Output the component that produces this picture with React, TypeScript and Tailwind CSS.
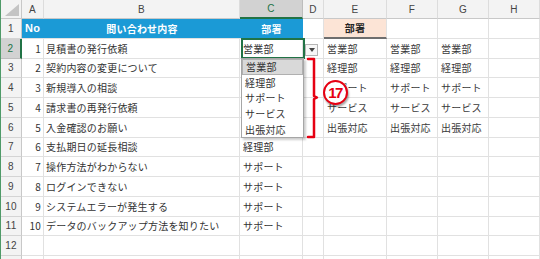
const cols = ["A", "B", "C", "D", "E", "F", "G", "H"];

type Row = { no: string; q: string; c: string; e: string; f: string; g: string };

// C3〜C6 はドロップダウンに隠れるので空
const rows: Row[] = [
  { no: "1", q: "見積書の発行依頼", c: "営業部", e: "営業部", f: "営業部", g: "営業部" },
  { no: "2", q: "契約内容の変更について", c: "", e: "経理部", f: "経理部", g: "経理部" },
  { no: "3", q: "新規導入の相談", c: "", e: "サポート", f: "サポート", g: "サポート" },
  { no: "4", q: "請求書の再発行依頼", c: "", e: "サービス", f: "サービス", g: "サービス" },
  { no: "5", q: "入金確認のお願い", c: "", e: "出張対応", f: "出張対応", g: "出張対応" },
  { no: "6", q: "支払期日の延長相談", c: "経理部", e: "", f: "", g: "" },
  { no: "7", q: "操作方法がわからない", c: "サポート", e: "", f: "", g: "" },
  { no: "8", q: "ログインできない", c: "サポート", e: "", f: "", g: "" },
  { no: "9", q: "システムエラーが発生する", c: "サポート", e: "", f: "", g: "" },
  { no: "10", q: "データのバックアップ方法を知りたい", c: "サポート", e: "", f: "", g: "" },
  { no: "", q: "", c: "", e: "", f: "", g: "" },
  { no: "", q: "", c: "", e: "", f: "", g: "" },
];

const options = ["営業部", "経理部", "サポート", "サービス", "出張対応"];

const cell = "border-r border-b border-[#e1e1e1] flex items-center overflow-hidden whitespace-nowrap";

function RowHead({ n, active }: { n: number; active?: boolean }) {
  return (
    <div
      className={`flex items-center justify-center border-b border-r font-['Liberation_Sans',sans-serif] text-[10px] ${
        active
          ? "bg-[#d2d2d2] text-[#217346] border-r-2 border-r-[#217346] border-b-[#bdbdbd]"
          : "bg-[#f3f3f3] text-[#444] border-r-[#c8c8c8] border-b-[#d4d4d4]"
      }`}
    >
      {n <= 12 ? n : ""}
    </div>
  );
}

export default function App() {
  return (
    <div className="relative w-[540px] h-[259px] overflow-hidden bg-white border-l border-[#4f9a68] font-['Noto_Sans_CJK_JP',sans-serif] text-[10px] tracking-[0.2px] text-[#333]">
      <div className="grid grid-cols-[21px_22px_196px_63px_21px_63px_51px_51px_51px] grid-rows-[19px_repeat(13,19.75px)]">
        {/* column header row */}
        <div className="relative bg-[#f3f3f3] border-r border-b border-[#c8c8c8]">
          <svg className="absolute right-[2px] bottom-[2px]" width="14" height="12" viewBox="0 0 14 12">
            <path d="M14 0 V12 H0 Z" fill="#c4c4c4" />
          </svg>
        </div>
        {cols.map((c) => (
          <div
            key={c}
            className={`flex items-center justify-center font-['Liberation_Sans',sans-serif] text-[10px] border-r ${
              c === "C"
                ? "bg-[#d2d2d2] text-[#217346] border-b-2 border-b-[#217346] border-r-[#bdbdbd]"
                : "bg-[#f3f3f3] text-[#444] border-b border-b-[#c8c8c8] border-r-[#dcdcdc]"
            }`}
          >
            {c}
          </div>
        ))}

        {/* row 1 */}
        <RowHead n={1} />
        <div className="flex items-center pl-[3px] bg-[#1b9ad6] text-white font-bold text-[11px] border-b border-[#e1e1e1] font-['Liberation_Sans',sans-serif]">
          No
        </div>
        <div className="flex items-center justify-center bg-[#1b9ad6] text-white font-bold border-b border-[#e1e1e1]">
          問い合わせ内容
        </div>
        <div className="flex items-center justify-center bg-[#1b9ad6] text-white font-bold border-b border-[#e1e1e1]">
          部署
        </div>
        <div className={cell} />
        <div className="flex items-center justify-center bg-[#fce4d6] text-[#222] font-bold border-b-2 border-b-[#6e6e6e] border-r border-r-[#e1e1e1]">
          部署
        </div>
        <div className={cell} />
        <div className={cell} />
        <div className={cell} />

        {rows.map((r, i) => (
          <div key={i} className="contents">
            <RowHead n={i + 2} active={i === 0} />
            <div className={`${cell} justify-end pr-[2px]`}>{r.no}</div>
            <div className={`${cell} pl-[2px]`}>{r.q}</div>
            <div className={`${cell} pl-[3px]`}>{r.c}</div>
            <div className={cell} />
            <div className={`${cell} pl-[3px] text-[#3a3a3a]`}>{r.e}</div>
            <div className={`${cell} pl-[3px] text-[#3a3a3a]`}>{r.f}</div>
            <div className={`${cell} pl-[3px] text-[#3a3a3a]`}>{r.g}</div>
            <div className={cell} />
          </div>
        ))}
      </div>

      {/* active cell C2 */}
      <div className="absolute left-[240px] top-[38px] w-[64px] h-[21px] border-2 border-[#217346]" />

      {/* dropdown button */}
      <div className="absolute left-[304px] top-[44px] w-[13px] h-[12px] bg-[#f7f7f7] border border-[#b5b5b5] flex items-center justify-center">
        <svg width="6" height="4" viewBox="0 0 6 4">
          <path d="M0 0 H6 L3 4 Z" fill="#444" />
        </svg>
      </div>

      {/* dropdown list */}
      <div className="absolute left-[240px] top-[58px] w-[63px] h-[80px] bg-white border border-[#a6a6a6] shadow-[2px_2px_2px_rgba(0,0,0,0.2)] flex flex-col">
        {options.map((o, i) => (
          <div
            key={o}
            className={`h-[15.6px] flex items-center pl-[3px] text-[#333] ${
              i === 0 ? "bg-[#d9d9d9] border border-[#b0b0b0]" : ""
            }`}
          >
            {o}
          </div>
        ))}
      </div>

      {/* red bracket */}
      <svg className="absolute left-[305px] top-[57px]" width="14" height="83" viewBox="0 0 14 83">
        <path
          d="M2 2 H8 V39 L11 40.5 L8 42 V80 H2"
          fill="none"
          stroke="#e60012"
          strokeWidth="2.5"
          strokeLinejoin="round"
          strokeLinecap="round"
        />
      </svg>

      {/* annotation */}
      <div className="absolute left-[322px] top-[80px] w-[25px] h-[25px] rounded-full bg-white border-2 border-[#e60012] shadow-[1px_2px_2px_rgba(0,0,0,0.35)] flex items-center justify-center">
        <span className="font-['Liberation_Sans',sans-serif] font-bold text-[15px] leading-none tracking-[-1.5px] text-[#e60012] pr-[1px]">
          17
        </span>
      </div>
    </div>
  );
}
